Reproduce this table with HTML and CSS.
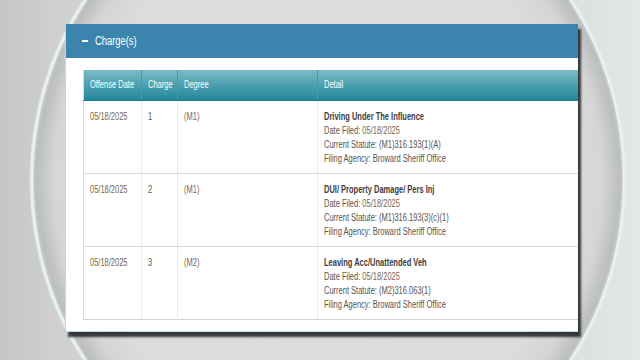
FILE: index.html
```html
<!DOCTYPE html>
<html lang="en">
<head>
<meta charset="utf-8">
<title>Charges</title>
<link rel="stylesheet" href="styles.css">
</head>
<body>
<section class="panel">
  <header class="panel-head">
    <span class="minus"></span>
    <span class="panel-title sq">Charge(s)</span>
  </header>
  <div class="panel-body">
    <table class="charges">
      <thead>
        <tr>
          <th class="c-date"><span class="sq">Offense Date</span></th>
          <th class="c-num"><span class="sq">Charge</span></th>
          <th class="c-deg"><span class="sq">Degree</span></th>
          <th class="c-det"><span class="sq">Detail</span></th>
        </tr>
      </thead>
      <tbody>
        <tr>
          <td><div class="sq warm">05/18/2025</div></td>
          <td><div class="sq">1</div></td>
          <td><div class="sq warm">(M1)</div></td>
          <td>
            <div class="sq">
              <div class="d-title">Driving Under The Influence</div>
              <div>Date Filed: <span class="warm">05/18/2025</span></div>
              <div>Current Statute: (M1)316.193(1)(A)</div>
              <div>Filing Agency: Broward Sheriff Office</div>
            </div>
          </td>
        </tr>
        <tr>
          <td><div class="sq warm">05/18/2025</div></td>
          <td><div class="sq">2</div></td>
          <td><div class="sq warm">(M1)</div></td>
          <td>
            <div class="sq">
              <div class="d-title">DUI/ Property Damage/ Pers Inj</div>
              <div>Date Filed: <span class="warm">05/18/2025</span></div>
              <div>Current Statute: (M1)316.193(3)(c)(1)</div>
              <div>Filing Agency: Broward Sheriff Office</div>
            </div>
          </td>
        </tr>
        <tr>
          <td><div class="sq warm">05/18/2025</div></td>
          <td><div class="sq">3</div></td>
          <td><div class="sq warm">(M2)</div></td>
          <td>
            <div class="sq">
              <div class="d-title">Leaving Acc/Unattended Veh</div>
              <div>Date Filed: <span class="warm">05/18/2025</span></div>
              <div>Current Statute: (M2)316.063(1)</div>
              <div>Filing Agency: Broward Sheriff Office</div>
            </div>
          </td>
        </tr>
      </tbody>
    </table>
  </div>
</section>
</body>
</html>
```
FILE: styles.css
```css
html {
  margin: 0;
  padding: 0;
  overflow: hidden;
}
body {
  margin: 0;
  width: 640px;
  height: 360px;
  overflow: hidden;
  background:
    radial-gradient(ellipse 298px 316px at 328px 180px,
      #dbdddc 0%, #dcdedd 80%, #d4d6d5 92%, #bdbfbe 97.6%, #c4c6c5 98.6%, #e8f2f2 99.1%, #e4eeee 99.8%, rgba(0,0,0,0) 100.3%),
    linear-gradient(90deg, #c5c6c4 0%, #cfd0ce 8%, #d8dad9 50%, #dde1e1 92%, #e3e7e7 100%);
  font-family: "Liberation Sans", Arial, sans-serif;
  font-variant-ligatures: none;
  padding: 24px 0 0 65px;
  box-sizing: border-box;
}
.sq {
  display: inline-block;
  white-space: nowrap;
  transform: scaleX(0.75);
  transform-origin: 0 50%;
}
td > .sq {
  display: block;
  transform-origin: 0 0;
}
.panel {
  width: 512px;
  background: #ffffff;
  overflow: hidden;
  border-left: 1px solid #b9dce2;
  border-bottom: 1px solid #b9dce2;
  box-shadow: 3px 5px 2px rgba(35, 40, 42, 0.9);
  padding-bottom: 11px;
}
.panel-head {
  height: 34px;
  background: #3b84ad;
  display: flex;
  align-items: center;
  padding-left: 16px;
  gap: 7px;
}
.minus {
  width: 6px;
  height: 2px;
  background: #ffffff;
}
.panel-title {
  color: #ffffff;
  font-size: 12.5px;
}
.panel-body {
  padding: 12px 0 0 17px;
}
.charges {
  border-collapse: collapse;
  width: 540px;
  table-layout: fixed;
  font-size: 10px;
  color: #555555;
  border-left: 1px solid #d8dcdc;
  border-bottom: 1px solid #cfd5d6;
}
.charges th {
  height: 30px;
  padding: 0 6px;
  text-align: left;
  font-weight: normal;
  color: #ffffff;
  background: linear-gradient(180deg, #7cbbc6 0%, #4da0af 50%, #23879a 100%);
  border-right: 1px solid #4b98a6;
  border-bottom: 1px solid #1e7c8e;
  box-sizing: border-box;
  white-space: nowrap;
}
.c-date { width: 58px; }
.c-num { width: 36px; }
.c-deg { width: 140px; }
.charges td {
  height: 73px;
  vertical-align: top;
  padding: 9px 6px 0;
  line-height: 14px;
  border-right: 1px solid #e9ebeb;
  border-bottom: 1px solid #d7dcdc;
  box-sizing: border-box;
}
.charges tbody tr:last-child td {
  border-bottom: none;
}
.warm {
  color: #7d6650;
}
.d-title {
  font-weight: bold;
  color: #3e3e3e;
}
```
